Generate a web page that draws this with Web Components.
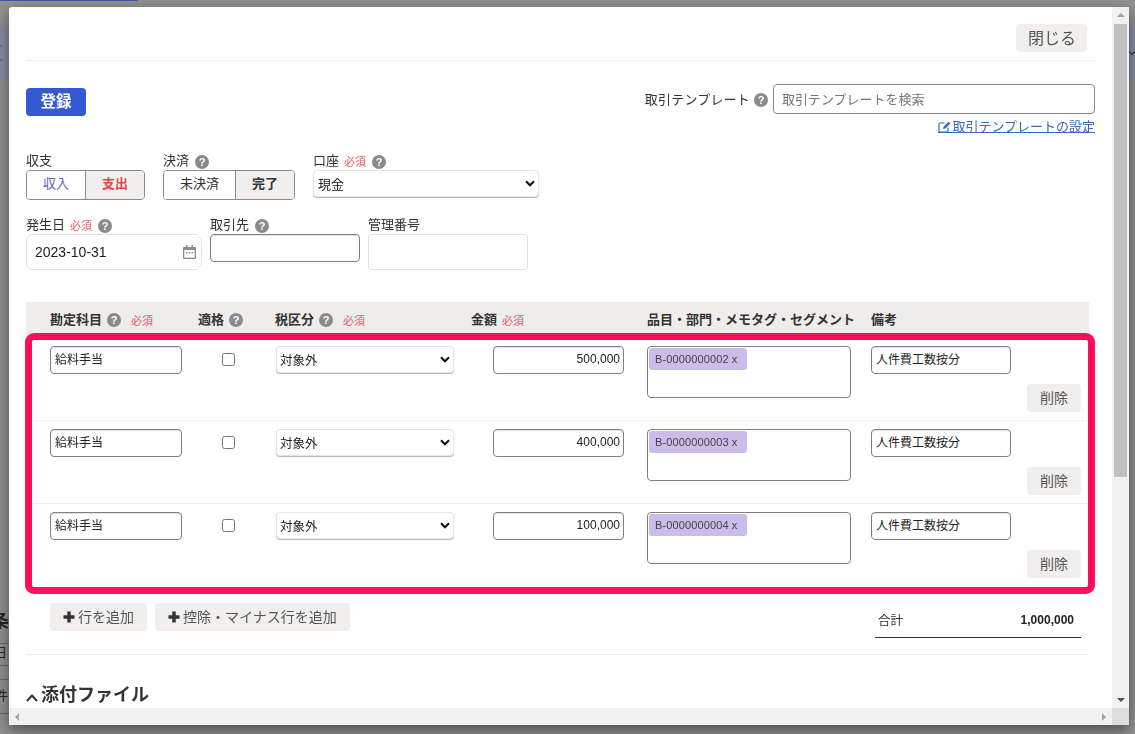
<!DOCTYPE html>
<html lang="ja">
<head>
<meta charset="utf-8">
<title>取引登録</title>
<style>
html,body{margin:0;height:100%;overflow:hidden;background:#939393;font-family:"Liberation Sans","Noto Sans CJK JP",sans-serif;color:#333;font-size:13px}
</style>
</head>
<body>
<fb-backdrop></fb-backdrop>
<fb-modal>
  <fb-topbar><fb-btn size="lg">閉じる</fb-btn></fb-topbar>
  <fb-head></fb-head>
  <fb-form-row gap="18" top="18">
    <fb-field label="収支"><fb-toggle a="収入" b="支出" acolor="#5a62c4" bcolor="#e2474b" aw="59" bw="58"></fb-toggle></fb-field>
    <fb-field label="決済" help><fb-toggle a="未決済" b="完了" acolor="#333" bcolor="#333" aw="72" bw="58"></fb-toggle></fb-field>
    <fb-field label="口座" req help><fb-select w="226" value="現金" fs="13" pl="4"></fb-select></fb-field>
  </fb-form-row>
  <fb-form-row gap="8" top="16">
    <fb-field label="発生日" req help><fb-input w="176" h="36" kind="soft" pad="8" cal>2023-10-31</fb-input></fb-field>
    <fb-field label="取引先" help><fb-input w="150" h="28" kind="strong"></fb-input></fb-field>
    <fb-field label="管理番号"><fb-input w="160" h="36" kind="soft"></fb-input></fb-field>
  </fb-form-row>
  <fb-table>
    <fb-line amount="500,000" tag="B-0000000002"></fb-line>
    <fb-line amount="400,000" tag="B-0000000003"></fb-line>
    <fb-line amount="100,000" tag="B-0000000004"></fb-line>
  </fb-table>
  <fb-foot></fb-foot>
  <fb-section>添付ファイル</fb-section>
</fb-modal>
<script>
function def(name, css, html, init){
  customElements.define(name, class extends HTMLElement{
    constructor(){super();this.attachShadow({mode:'open'});}
    connectedCallback(){
      const h = typeof html==='function'?html(this):html;
      this.shadowRoot.innerHTML='<style>'+(typeof css==='function'?css(this):css)+'</style>'+h;
      if(init)init(this);
    }
  });
}
const CJK='"Liberation Sans","Noto Sans CJK JP",sans-serif';

def('fb-backdrop',`
  :host{display:block;position:fixed;inset:0;overflow:hidden;background:#939393;color:#262626;font-family:${CJK}}
  div{position:absolute}
  .bar{left:0;top:0;width:138px;height:1px;background:#3d5ba6}
  .bl{left:0;top:25px;width:9px;height:56px;background:#8a90a4}
  .br{right:0;top:25px;width:6px;height:56px;background:#8a90a4}
  .dot{left:0;width:2px;height:2px;background:#6a6f80}
  .t1{left:-9px;top:609px;font-size:18px;font-weight:bold;line-height:24px}
  .t2{left:-6px;top:645px;font-size:13px;line-height:16px}
  .t3{left:-5px;top:688px;font-size:13px;line-height:16px}
  .l{left:0;width:9px;height:1px;background:#6d6d6d}
`,`
  <div class="bar"></div><div class="bl"></div><div class="br"></div>
  <div class="dot" style="top:45px"></div><div class="dot" style="top:59px"></div>
  <svg style="position:absolute;right:0;top:50px;width:6px;height:6px" viewBox="0 0 6 6"><path d="M0 1.500 3 4.500 6 1.500" fill="none" stroke="#333" stroke-width="1.200"/></svg>
  <div class="t1">条</div><div class="t2">日</div><div class="t3">件</div>
  <div class="l" style="top:643px"></div><div class="l" style="top:665px"></div><div class="l" style="top:679px"></div><div class="l" style="top:713px"></div>
`);

def('fb-modal',`
  :host{display:grid;position:absolute;left:9px;top:7px;width:1120px;height:718px;grid-template-columns:1fr 17px;grid-template-rows:1fr 17px;background:#fff;box-shadow:0 5px 15px rgba(0,0,0,.5);border-radius:3px 0 0 0;overflow:hidden;font-family:${CJK}}
  .body{overflow:hidden;padding:17px 17px 0 17px;min-width:0}
  .v{background:#f1f1f1;display:flex;flex-direction:column;align-items:center;position:relative}
  .v .up{margin-top:6px;width:0;height:0;border:4px solid transparent;border-top:0;border-bottom:4px solid #a3a3a3}
  .v .thumb{position:absolute;top:17px;left:2px;right:2px;height:453px;background:#c1c1c1}
  .v .dn{position:absolute;bottom:6px;left:4.500px;width:0;height:0;border:4px solid transparent;border-bottom:0;border-top:4px solid #505050}
  .h{background:#f1f1f1;display:flex;align-items:center;justify-content:space-between;padding:0 6px}
  .h i{display:block;width:0;height:0;border:4px solid transparent}
  .h .lf{border-left:0;border-right:4px solid #a3a3a3}
  .h .rt{border-right:0;border-left:4px solid #a3a3a3}
  .c{background:#dcdcdc}
`,`
  <div class="body"><slot></slot></div>
  <div class="v"><div class="up"></div><div class="thumb"></div><div class="dn"></div></div>
  <div class="h"><i class="lf"></i><i class="rt"></i></div>
  <div class="c"></div>
`);

def('fb-topbar',`
  :host{display:flex;justify-content:flex-end;padding:0 8px 8px 0;border-bottom:1px solid #eeeeee}
`,`<slot></slot>`);

def('fb-btn',t=>{
  const s=t.getAttribute('size');
  return `:host{display:inline-flex;align-items:center;justify-content:center;gap:2px;height:28px;box-sizing:border-box;background:#f0efed;border-radius:4px;color:#555;font-size:${s==='lg'?'16':'14'}px;padding:0 ${s==='lg'?'11':'13'}px 2px ${s==='lg'?'12':'13'}px;white-space:nowrap;font-family:${CJK}}
  svg{width:12px;height:12px;margin:2px 1px 0 0}`;
},t=>(t.hasAttribute('plus')?'<svg viewBox="0 0 12 12"><path d="M4.300 0.500h3.400v3.800h3.800v3.400h-3.800v3.800h-3.400v-3.800h-3.800v-3.400h3.800z" fill="#333"/></svg>':'')+'<slot></slot>');

def('fb-help',`
  :host{display:inline-flex;width:14px;height:14px;border-radius:50%;background:#8a8a8a;color:#fff;font:bold 11px/14px "Liberation Sans",sans-serif;align-items:center;justify-content:center;flex:none}
`,`?`);

def('fb-req',`
  :host{display:inline-block;color:#e35a5f;font-size:11px;font-weight:normal;line-height:14px}
`,`必須`);

def('fb-head',`
  :host{display:flex;justify-content:space-between;align-items:flex-start;margin-top:23px}
  .reg{margin-top:4px;width:60px;height:28px;box-sizing:border-box;background:#3559d1;border-radius:4px;color:#fff;font-size:15.500px;font-weight:bold;display:flex;align-items:center;justify-content:center;padding-bottom:5px}
  .r{display:flex;flex-direction:column;align-items:flex-end}
  .t{display:flex;align-items:center;gap:4px;font-size:13px;color:#333}
  .t span{padding-bottom:2px;letter-spacing:.2px}
  .t fb-help{margin-right:1px;margin-top:1px}
  .link{display:block;box-sizing:border-box;margin:4px 0 1px;height:15px;line-height:17px;font-size:13px;color:#3a6ab5;border-bottom:1px solid #3a6ab5;white-space:nowrap}
  svg{width:13px;height:13px;vertical-align:-2px;margin-right:1px}
`,`
  <div class="reg">登録</div>
  <div class="r">
    <div class="t"><span>取引テンプレート</span><fb-help></fb-help><fb-input w="322" h="30" kind="plain" pad="8" ph shift="2">取引テンプレートを検索</fb-input></div>
    <div class="link"><svg viewBox="0 0 13 13"><path d="M10 7.500V11a1 1 0 0 1-1 1H2a1 1 0 0 1-1-1V4a1 1 0 0 1 1-1h4.500" fill="none" stroke="#3a6ab5" stroke-width="1.200"/><path d="M5 9l.6-2.400L10.500 1.700l1.800 1.800L7.400 8.400z" fill="#3a6ab5"/></svg>取引テンプレートの設定</div>
  </div>
`);

def('fb-form-row',t=>`
  :host{display:flex;align-items:flex-start;gap:${t.getAttribute('gap')}px;margin-top:${t.getAttribute('top')}px}
`,`<slot></slot>`);

def('fb-field',`
  :host{display:block}
  .lb{display:flex;align-items:center;height:18px;gap:5px;font-size:13px;color:#333;line-height:18px}
  .lb fb-help{margin-left:1px;margin-top:2px}
  .lb fb-req{margin-top:2px}
`,t=>`
  <div class="lb"><span>${t.getAttribute('label')}</span>${t.hasAttribute('req')?'<fb-req></fb-req>':''}${t.hasAttribute('help')?'<fb-help></fb-help>':''}</div>
  <slot></slot>
`);

def('fb-toggle',t=>`
  :host{display:flex;height:30px;box-sizing:border-box;border:1px solid #8a8a8a;border-radius:4px;overflow:hidden;font-size:13px;width:max-content}
  div{display:flex;align-items:center;justify-content:center;box-sizing:border-box;padding-bottom:6px}
  .a{width:${t.getAttribute('aw')}px;color:${t.getAttribute('acolor')};background:#fff;border-right:1px solid #8a8a8a}
  .b{width:${t.getAttribute('bw')}px;color:${t.getAttribute('bcolor')};background:#f0efed;font-weight:bold}
`,t=>`<div class="a">${t.getAttribute('a')}</div><div class="b">${t.getAttribute('b')}</div>`);

def('fb-select',t=>`
  :host{display:block;width:${t.getAttribute('w')}px;height:27px}
  select{width:100%;height:100%;box-sizing:border-box;appearance:none;-webkit-appearance:none;border:1px solid #e6e6e6;border-radius:4px;background:#fff;box-shadow:0 1px 1px #b5b5b5;font:${t.getAttribute('fs')||'12.500'}px ${CJK};color:#222;padding:2px 24px 0 ${t.getAttribute('pl')||'3'}px;outline:none}
  .w{position:relative;height:100%}
  svg{position:absolute;right:4px;top:10px;width:10px;height:7px;pointer-events:none}
`,t=>`<div class="w"><select><option>${t.getAttribute('value')}</option></select><svg viewBox="0 0 10 7"><path d="M1 1.300 5 5.300 9 1.300" fill="none" stroke="#111" stroke-width="2"/></svg></div>`);

def('fb-input',t=>{
  const k=t.getAttribute('kind')||'line';
  const border={soft:'1px solid #e4e2da',strong:'1px solid #7f7f7f',plain:'1px solid #8a8a8a',line:'1px solid #808080'}[k];
  const rad=t.hasAttribute('cal')?'7px':k==='soft'?'3px':'4px';
  const sh=(k==='line'||k==='strong')?'box-shadow:inset 0 1px 1px rgba(0,0,0,.12);':'';
  const h=+t.getAttribute('h');
  const right=t.hasAttribute('right');
  const fs=t.hasAttribute('cal')?'14':t.hasAttribute('ph')?'13':'12';
  const pad=t.getAttribute('pad')||'4';
  return `:host{display:flex;align-items:center;box-sizing:border-box;flex:none;width:${t.getAttribute('w')}px;height:${h}px;border:${border};border-radius:${rad};${sh}background:#fff;padding:0 ${right?'3':pad}px ${t.getAttribute('shift')||(right?'2':t.hasAttribute('cal')?'0':'4')}px ${pad}px;font-size:${fs}px;color:${t.hasAttribute('ph')?'#777':'#222'};white-space:nowrap;justify-content:${right?'flex-end':'space-between'};font-family:${CJK}}
  svg{width:13px;height:14px;flex:none;margin-right:-3px}`;
},t=>'<slot></slot>'+(t.hasAttribute('cal')?'<svg viewBox="0 0 13 14"><path d="M3 0h1.500v2h4V0H10v2h2a1 1 0 0 1 1 1v10a1 1 0 0 1-1 1H1a1 1 0 0 1-1-1V3a1 1 0 0 1 1-1h2z" fill="#8c8c8c"/><rect x="1.300" y="5" width="10.400" height="7.700" fill="#fff"/><path d="M3 7h1.500v1.500H3zM5.800 7h1.500v1.500H5.800zM8.500 7H10v1.500H8.500z" fill="#8c8c8c"/></svg>':''));

const COLS='grid-template-columns:148px 77px 196px 176px 224px 1fr;padding-left:24px;';

def('fb-table',`
  :host{display:block;position:relative;margin-top:32px;width:1063px}
  .hd{display:grid;${COLS}height:34px;box-sizing:border-box;padding-bottom:2px;margin-bottom:2px;align-items:center;background:#eeedeb;font-weight:bold;font-size:13px;color:#333}
  .hd>div{display:flex;align-items:center;gap:5px;white-space:nowrap}
  .hd fb-help{margin-top:4px}
  .hd fb-req{margin-top:6px}
  .frame{position:absolute;left:-1px;top:31px;width:1070px;height:261px;box-sizing:border-box;border:7px solid #ff0f5b;border-radius:9px;pointer-events:none}
`,`
  <div class="hd">
    <div>勘定科目<fb-help></fb-help><fb-req style="margin-left:5px"></fb-req></div>
    <div>適格<fb-help></fb-help></div>
    <div>税区分<fb-help></fb-help><fb-req style="margin-left:5px"></fb-req></div>
    <div>金額<fb-req></fb-req></div>
    <div>品目・部門・メモタグ・セグメント</div>
    <div>備考</div>
  </div>
  <slot></slot>
  <div class="frame"></div>
`);

def('fb-line',`
  :host{display:grid;${COLS}box-sizing:border-box;height:83px;padding-top:8px;padding-right:8px;border-bottom:1px solid #eeeeee;position:relative;align-items:start}
  :host(:last-child){border-bottom:0}
  .chk{width:13px;height:13px;box-sizing:border-box;border:1px solid #767676;border-radius:2.500px;background:#fff;margin:7px 0 0 24px}
  .amt{margin-left:22px}
  .box{width:204px;height:52px;box-sizing:border-box;border:1px solid #808080;border-radius:4px;padding:1px;background:#fff}
  .tag{width:98px;height:22px;box-sizing:border-box;background:#cbbdea;border-radius:3px;font:11px/22px "Liberation Sans",sans-serif;letter-spacing:.12px;color:#444;padding-left:6px;white-space:nowrap}
  .last{display:block;position:relative}
  fb-btn{position:absolute;right:0;top:38px;width:54px;padding:0 0 2px}
  fb-select{margin-left:1px}
`,t=>`
  <fb-input w="132" h="28">給料手当</fb-input>
  <div class="chk"></div>
  <fb-select w="178" value="対象外"></fb-select>
  <div class="amt"><fb-input w="131" h="28" right>${t.getAttribute('amount')}</fb-input></div>
  <div class="box"><div class="tag">${t.getAttribute('tag')} x</div></div>
  <div class="last"><fb-input w="140" h="28">人件費工数按分</fb-input><fb-btn>削除</fb-btn></div>
`);

def('fb-foot',`
  :host{display:block;width:1063px;margin-top:16px;border-bottom:1px solid #eeeeee;padding-bottom:16px;box-sizing:border-box;height:52px;position:relative}
  .wrap{display:flex;justify-content:space-between;padding:0 8px 0 24px}
  .btns{display:flex;gap:8px}
  .total{width:206px;height:35px;box-sizing:border-box;border-bottom:1px solid #333;display:flex;justify-content:space-between;align-items:center;padding:0 7px 1px 3px;font-size:12.500px;color:#333}
  b{font-size:12px;color:#222}
`,`
  <div class="wrap">
    <div class="btns"><fb-btn plus>行を追加</fb-btn><fb-btn plus>控除・マイナス行を追加</fb-btn></div>
    <div class="total"><span>合計</span><b>1,000,000</b></div>
  </div>
`);

def('fb-section',`
  :host{display:flex;align-items:center;gap:3px;margin-top:28px;height:24px;font-size:18px;font-weight:bold;color:#333;line-height:24px}
  svg{width:12px;height:9px;flex:none;margin-top:5px}
`,`<svg viewBox="0 0 12 9"><path d="M1 8 6 2.500l5 5.500" fill="none" stroke="#333" stroke-width="2"/></svg><slot></slot>`);
</script>
</body>
</html>
